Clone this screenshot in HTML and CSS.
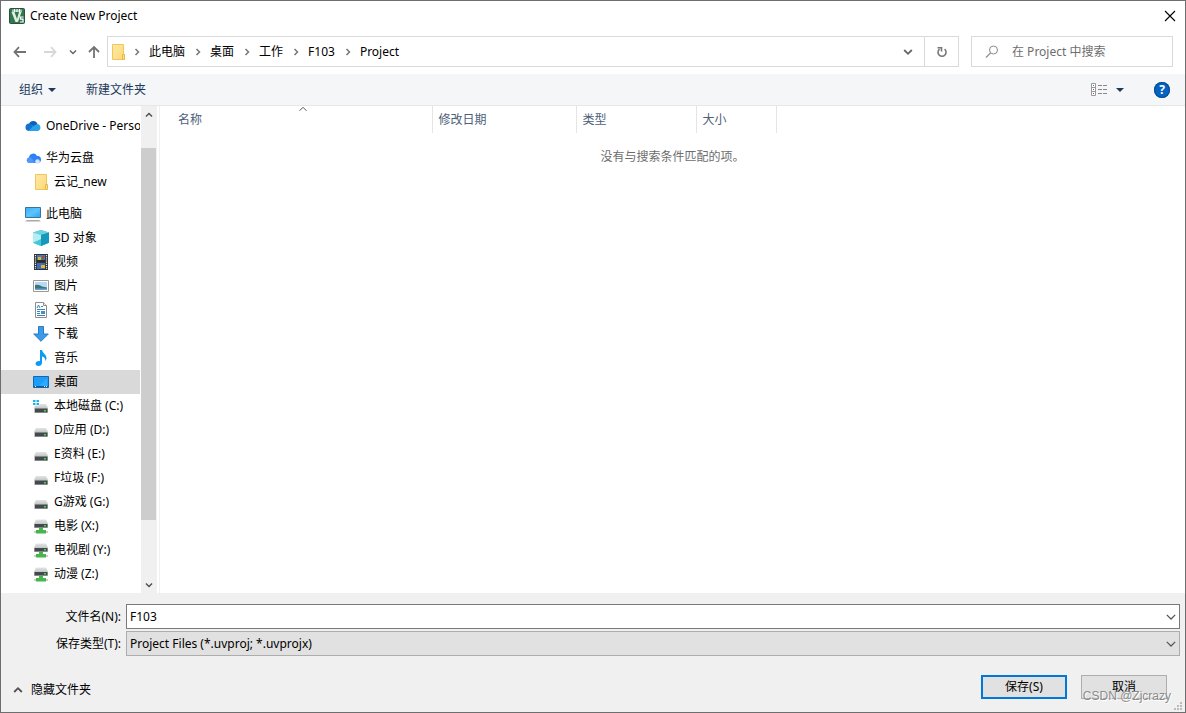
FILE: index.html
```html
<!DOCTYPE html>
<html lang="zh-CN">
<head>
<meta charset="utf-8">
<title>Create New Project</title>
<link rel="stylesheet" href="styles.css">
</head>
<body>
<svg class="sprite" aria-hidden="true">
  <defs>
    <linearGradient id="gFolder" x1="0" y1="0" x2="1" y2="1"><stop offset="0" stop-color="#ffe9a3"/><stop offset="1" stop-color="#fcd97a"/></linearGradient>
    <linearGradient id="gScreen" x1="0" y1="0" x2="1" y2="1"><stop offset="0" stop-color="#37aef8"/><stop offset=".5" stop-color="#5cc4ff"/><stop offset="1" stop-color="#2aa2f2"/></linearGradient>
    <linearGradient id="gLid" x1="0" y1="0" x2="0" y2="1"><stop offset="0" stop-color="#e2e4e5"/><stop offset="1" stop-color="#c4c7c9"/></linearGradient>
  </defs>
  <symbol id="folder" viewBox="0 0 16 16"><path d="M2.500.5h11v15h-11z" fill="url(#gFolder)" stroke="#eec65a"/><path d="M12.500 15.500v-5h2v5z" fill="#ffe08a" stroke="#e5b94a"/></symbol>
  <symbol id="drive" viewBox="0 0 16 16"><path d="M3 6h10l2 4H1z" fill="url(#gLid)"/><path d="M1 10h14v5H1z" fill="#c3c5c7"/><path d="M2 10.500h12.500v4H2z" fill="#45484b"/><path d="M11 12h2v1.500h-2z" fill="#2fe03c"/></symbol>
  <symbol id="netdrive" viewBox="0 0 16 16"><path d="M3 1.500h10L15 6H1z" fill="url(#gLid)"/><path d="M1 6h14v4H1z" fill="#c3c5c7"/><path d="M1.500 6h13v3.500h-13z" fill="#45484b"/><path d="M11 7h2v1.500h-2z" fill="#2fe03c"/><path d="M1 13h14v2H1z" fill="#c9cdca"/><path d="M6 10h4v2h3v3.500H3V12h3z" fill="#45b649"/></symbol>
  <symbol id="chev" viewBox="0 0 10 10"><path d="M1.500 3.200 5 6.700l3.500-3.500" fill="none" stroke="currentColor"/></symbol>
  <symbol id="chevbold" viewBox="0 0 10 10"><path d="M1.200 3 5 6.800 8.800 3" fill="none" stroke="currentColor" stroke-width="1.800"/></symbol>
  <symbol id="sep" viewBox="0 0 10 10"><path d="m3.500 2 3 3-3 3" fill="none" stroke="currentColor" stroke-width="1.500"/></symbol>
</svg>

<main class="dialog">
  <header class="titlebar">
    <svg class="icon" viewBox="0 0 16 16"><rect x=".5" y=".5" width="15" height="15" rx="1" fill="#34774e" stroke="#245538"/><path d="M3 1.500h10v2.500H3z" fill="#9fc3ab"/><path d="M5.500 1v3M8 1v3M10.500 1v3" stroke="#fff"/><path d="M2.500 4h3L8 11l2-7h2.500L9 14H6.500z" fill="#e3eee6"/><path d="M14.500 9h-3v2.200h2.500V14h-3" fill="none" stroke="#fff" stroke-width="1.200"/></svg>
    <h1 class="title">Create New Project</h1>
    <button class="close" aria-label="关闭"><svg width="12" height="12" viewBox="0 0 12 12"><path d="m1 1 10 10M11 1 1 11" stroke="#000" stroke-width="1.100"/></svg></button>
  </header>

  <nav class="navbar">
    <div class="history">
      <button class="plain" aria-label="后退"><svg width="14" height="12" viewBox="0 0 14 12"><path d="M1.500 6H13M6 1.200 1.500 6 6 10.800" fill="none" stroke="#737373" stroke-width="1.800"/></svg></button>
      <button class="plain" aria-label="前进"><svg width="14" height="12" viewBox="0 0 14 12"><path d="M1 6h11.500M8 1.200 12.500 6 8 10.800" fill="none" stroke="#d8d8d8" stroke-width="1.800"/></svg></button>
      <button class="plain recent" aria-label="最近的位置"><svg class="tiny"><use href="#chevbold"/></svg></button>
      <button class="plain" aria-label="上移"><svg width="12" height="14" viewBox="0 0 12 14"><path d="M6 13V2M1 7l5-5 5 5" fill="none" stroke="#737373" stroke-width="1.800"/></svg></button>
    </div>
    <div class="address">
      <svg class="icon"><use href="#folder"/></svg>
      <svg class="sep"><use href="#sep"/></svg><button class="crumb">此电脑</button>
      <svg class="sep"><use href="#sep"/></svg><button class="crumb">桌面</button>
      <svg class="sep"><use href="#sep"/></svg><button class="crumb">工作</button>
      <svg class="sep"><use href="#sep"/></svg><button class="crumb">F103</button>
      <svg class="sep"><use href="#sep"/></svg><button class="crumb">Project</button>
      <button class="plain drop" aria-label="以前的位置"><svg class="small"><use href="#chevbold"/></svg></button>
      <button class="refresh" aria-label="刷新"><svg width="12" height="12" viewBox="0 0 12 12"><path d="M3.500 3.200A4 4 0 1 0 8.600 3.200M1.500 1.700h4v3.800" fill="none" stroke="#777" stroke-width="1.600"/></svg></button>
    </div>
    <label class="search">
      <svg width="14" height="14" viewBox="0 0 14 14"><circle cx="8.500" cy="5" r="4" fill="none" stroke="#8a8a8a"/><path d="M5.500 8 1 12.500" stroke="#a08c8c" stroke-width="1.200"/></svg>
      <input type="search" placeholder="在 Project 中搜索" aria-label="在 Project 中搜索">
    </label>
  </nav>

  <div class="toolbar">
    <button class="tool">组织<span class="caret"></span></button>
    <button class="tool">新建文件夹</button>
    <button class="tool view" aria-label="更改视图"><svg width="17" height="13" viewBox="0 0 17 13"><path d="M.5.5h4v12h-4zM.5 4.500h4M.5 8.500h4" fill="#fff" stroke="#999"/><path d="M2 2h1v1H2zM2 6h1v1H2z" fill="#4b7db5"/><path d="M2 10h1v1H2z" fill="#c33"/><path d="M7 2.500h4m1 0h4M7 6.500h4m1 0h4M7 10.500h4m1 0h4" stroke="#888"/></svg><span class="caret"></span></button>
    <button class="help" aria-label="帮助">?</button>
  </div>

  <section class="content">
    <aside class="tree">
      <ul class="group">
        <li class="item"><svg class="icon" viewBox="0 0 16 16"><path d="M4 6a4.500 4.500 0 0 1 8.500 0L8 10 2 8z" fill="#0f5fb5"/><path d="M4 5.500a3.800 3.800 0 0 0-.5 7.500l7-4.500-4-2.600z" fill="#1272cf"/><path d="M8 8.200 12 6a3.600 3.600 0 0 1 1 7H3.500z" fill="#28a2ea"/></svg>OneDrive - Personal</li>
      </ul>
      <ul class="group">
        <li class="item"><svg class="icon" viewBox="0 0 16 16"><path d="M4 7.500A4.200 4.200 0 0 1 12 6a3.500 3.500 0 0 1 1 7H4a2.800 2.800 0 0 1 0-5.500z" fill="#2f82f5"/><path d="M4 7.500c3 0 4 2 5.500 5.500H4a2.800 2.800 0 0 1 0-5.500z" fill="#4f98fb"/><circle cx="12.500" cy="11.500" r="2.300" fill="#d5e5fa"/></svg>华为云盘</li>
        <li class="item sub"><svg class="icon"><use href="#folder"/></svg>云记_new</li>
      </ul>
      <ul class="group">
        <li class="item"><svg class="icon" viewBox="0 0 16 16"><path d="M.5 1.500h15v10H.5z" fill="url(#gScreen)" stroke="#3e7396"/><path d="M2 14h12l2 1.500H0z" fill="#a3abb2"/></svg>此电脑</li>
        <li class="item sub"><svg class="icon" viewBox="0 0 16 16"><path d="m8 0 8 2.500v10.300L8 16 0 12.800V2.500z" fill="#38b4cc"/><path d="m8 0 8 2.500L8 5 0 2.500z" fill="#6fd0e0"/><path d="M0 2.500 8 5v11l-8-3.200z" fill="#b5eef2"/><path d="M8 9v7l-8-3.200z" fill="#42c7d8"/><path d="m16 2.500-8 2.500v11l8-3.200z" fill="#1599ba"/></svg>3D 对象</li>
        <li class="item sub"><svg class="icon" viewBox="0 0 16 16"><path d="M1 0h14v16H1z" fill="#333"/><path d="M2.500 1v14M13.500 1v14" stroke="#eee" stroke-width="1.200" stroke-dasharray="1.200 1"/><path d="M4 1h8v7H4z" fill="#4679ba"/><path d="M4 9h8v6H4z" fill="#3a6fc2"/><path d="M5 3h3v3H5zM8 11h4v3H8z" fill="#e0b92c"/><path d="M9 2h2v3H9z" fill="#a64a32"/><path d="M4 6h8v2H4z" fill="#272d28"/></svg>视频</li>
        <li class="item sub"><svg class="icon" viewBox="0 0 16 16"><path d="M.5 2.500h15v11H.5z" fill="#fff" stroke="#9a9a9a"/><path d="M2 4h12v8H2z" fill="#b4daf5"/><path d="M2 7q4-1 7 1.500l5 1V12H2z" fill="#3e7479"/><path d="M2 10.500h12V12H2z" fill="#6ba1cc"/></svg>图片</li>
        <li class="item sub"><svg class="icon" viewBox="0 0 16 16"><path d="M2.500.5h8l3 3v12h-11z" fill="#fff" stroke="#8d8d8d"/><path d="M10.500.5v3h3" fill="#eee" stroke="#8d8d8d"/><path d="m4 6 1.500-3L7 6M8 4.500h2M4 7.500h8M4 9.500h3M4 11.500h3M4 13.500h8" fill="none" stroke="#3784bd"/><path d="M8 9h4v3H8z" fill="#4b8dbd"/></svg>文档</li>
        <li class="item sub"><svg class="icon" viewBox="0 0 16 16"><path d="M5.500.5h5V8h4.800L8 15.300.7 8h4.800z" fill="#3c9aeb" stroke="#2b7cc2"/></svg>下载</li>
        <li class="item sub"><svg class="icon" viewBox="0 0 16 16"><path d="M7 0h2c.4 3 4.800 4.500 4.500 8.500-.2 1.300-.8 2-1.500 2.500.8-3-1-4-3-4.600V13c0 1.800-1.700 3-3.700 3C3.600 16 2.500 15 2.500 13.800c0-2 2.300-3.200 4.500-2.600z" fill="#0d9bf2"/></svg>音乐</li>
        <li class="item sub selected"><svg class="icon" viewBox="0 0 16 16"><path d="M.5 2.500h15v11H.5z" fill="#1c9df8" stroke="#1168ae"/><path d="m6 12 8-8v8z" fill="#2fa9ff"/><path d="M1 12.500h14" stroke="#0c5796"/><path d="M2 12.500h1m8 0h1m1 0h1" stroke="#fff"/></svg>桌面</li>
        <li class="item sub"><svg class="icon" viewBox="0 0 16 16"><use href="#drive"/><path d="M0 1h6.500v6.500H0z" fill="#fff"/><path d="M0 2h2.500v2H0zM3.500 2H6v2H3.500zM0 5h2.500v2H0zM3.500 5H6v2H3.500z" fill="#16b4ef"/></svg>本地磁盘 (C:)</li>
        <li class="item sub"><svg class="icon"><use href="#drive"/></svg>D应用 (D:)</li>
        <li class="item sub"><svg class="icon"><use href="#drive"/></svg>E资料 (E:)</li>
        <li class="item sub"><svg class="icon"><use href="#drive"/></svg>F垃圾 (F:)</li>
        <li class="item sub"><svg class="icon"><use href="#drive"/></svg>G游戏 (G:)</li>
        <li class="item sub"><svg class="icon"><use href="#netdrive"/></svg>电影 (X:)</li>
        <li class="item sub"><svg class="icon"><use href="#netdrive"/></svg>电视剧 (Y:)</li>
        <li class="item sub"><svg class="icon"><use href="#netdrive"/></svg>动漫 (Z:)</li>
      </ul>
    </aside>
    <div class="scrollbar">
      <button class="plain arrow" aria-label="向上滚动"><svg class="tiny flip"><use href="#chevbold"/></svg></button>
      <div class="track"><div class="thumb"></div></div>
      <button class="plain arrow" aria-label="向下滚动"><svg class="tiny"><use href="#chevbold"/></svg></button>
    </div>
    <div class="files">
      <table class="list">
        <colgroup><col class="c-name"><col class="c-date"><col class="c-type"><col class="c-size"><col></colgroup>
        <thead><tr>
          <th class="sorted">名称<svg class="small flip sort"><use href="#chev"/></svg></th><th>修改日期</th><th>类型</th><th>大小</th><td></td>
        </tr></thead>
        <tbody><tr><td class="empty" colspan="5">没有与搜索条件匹配的项。</td></tr></tbody>
      </table>
    </div>
  </section>

  <form class="footer">
    <div class="fields">
      <label for="name">文件名(N):</label>
      <div class="combo editable"><input id="name" type="text" value="F103"><svg class="combo-arrow"><use href="#chev"/></svg></div>
      <label for="type">保存类型(T):</label>
      <div class="combo"><select id="type"><option>Project Files (*.uvproj; *.uvprojx)</option></select><svg class="combo-arrow"><use href="#chev"/></svg></div>
    </div>
    <div class="actions">
      <button type="button" class="plain hide"><svg class="small flip"><use href="#chevbold"/></svg>隐藏文件夹</button>
      <button type="button" class="btn primary">保存(S)</button>
      <button type="button" class="btn">取消</button>
    </div>
  </form>
  <span class="watermark">CSDN @Zjcrazy</span>
  <svg class="grip" viewBox="0 0 8 8"><path d="M6 0h2v2H6zM3 3h2v2H3zM6 3h2v2H6zM0 6h2v2H0zM3 6h2v2H3zM6 6h2v2H6z" fill="#bbb"/></svg>
</main>
</body>
</html>
```

FILE: styles.css
```css
* { box-sizing: border-box; }

body,
button,
input,
select {
  margin: 0;
  font-family: "Noto Sans", "Noto Sans CJK SC", sans-serif;
  font-size: 12px;
  line-height: 16px;
  color: #000;
}

button {
  padding: 0;
  border: 0;
  background: none;
}

svg { flex: none; display: block; }

.sprite { position: absolute; width: 0; height: 0; }
.icon { width: 16px; height: 16px; }
.small { width: 10px; height: 10px; }
.tiny { width: 8px; height: 8px; }
.flip { transform: scaleY(-1); }

.plain {
  display: flex;
  align-items: center;
  justify-content: center;
  color: #666;
}

.dialog {
  position: relative;
  display: flex;
  flex-direction: column;
  height: 100vh;
  border: 1px solid #6e6e6e;
  background: #fff;
}

.titlebar {
  display: flex;
  align-items: center;
  gap: 5px;
  height: 30px;
  padding-left: 8px;
}

.title { margin: 0; font-size: 12px; font-weight: 400; }

.close {
  display: flex;
  align-items: center;
  justify-content: center;
  width: 30px;
  height: 30px;
  margin-left: auto;
}

.navbar {
  display: flex;
  gap: 12px;
  padding: 5px 12px 7px 0;
}

.history {
  display: flex;
  align-items: center;
  gap: 16px;
  width: 94px;
  padding-left: 12px;
}

.recent { margin: 0 -5px 0 -4px; }

.address {
  display: flex;
  align-items: center;
  flex: 1;
  height: 31px;
  border: 1px solid #d9d9d9;
  padding-left: 2px;
}

.sep { width: 10px; height: 10px; margin: 0 7px 0 6px; color: #777; }
.crumb { padding: 0 2px 0 0; }
.drop { width: 32px; height: 29px; margin-left: auto; }

.refresh {
  display: flex;
  align-items: center;
  justify-content: center;
  width: 34px;
  height: 29px;
  border-left: 1px solid #d9d9d9;
}

.search {
  display: flex;
  align-items: center;
  gap: 13px;
  width: 202px;
  height: 31px;
  padding: 0 8px 0 13px;
  border: 1px solid #d9d9d9;
}

.search input {
  flex: 1;
  min-width: 0;
  padding: 0;
  border: 0;
  outline: 0;
  background: none;
}

.search input::placeholder { color: #6d6d6d; opacity: 1; }

.toolbar {
  display: flex;
  align-items: center;
  gap: 30px;
  height: 32px;
  padding: 0 15px 0 18px;
  border-bottom: 1px solid #e5e8ea;
  background: #f4f6f8;
}

.tool {
  display: flex;
  align-items: center;
  gap: 5px;
  color: #1e395b;
}

.caret {
  border: 4px solid transparent;
  border-top-color: #1e395b;
  border-bottom: 0;
}

.view { gap: 8px; margin-left: auto; }

.help {
  width: 16px;
  height: 16px;
  border-radius: 50%;
  background: #0562c1;
  box-shadow: inset 0 0 0 1px #064b92;
  color: #fff;
  font-weight: 700;
}

.content {
  display: flex;
  flex: 1;
  min-height: 0;
}

.tree {
  width: 139px;
  padding-top: 8px;
  overflow: hidden;
}

.group { margin: 0 0 8px; padding: 0; list-style: none; }

.item {
  display: flex;
  align-items: center;
  gap: 5px;
  height: 24px;
  padding-left: 24px;
  white-space: nowrap;
}

.sub { padding-left: 32px; }
.selected { background: #d9d9d9; }

.scrollbar {
  display: flex;
  flex-direction: column;
  width: 16px;
  margin-left: 1px;
  background: #f0f0f0;
}

.arrow { height: 17px; color: #505050; }
.track { flex: 1; padding-top: 25px; }
.thumb { width: 15px; height: 87%; background: #cdcdcd; }

.files {
  flex: 1;
  margin-left: 2px;
  border-left: 1px solid #f0f0f0;
}

.list {
  width: 100%;
  border-collapse: collapse;
  table-layout: fixed;
}

.c-name { width: 272px; }
.c-date { width: 144px; }
.c-type { width: 120px; }
.c-size { width: 80px; }

.list th {
  position: relative;
  height: 27px;
  padding: 0 6px;
  border-right: 1px solid #e5e5e5;
  color: #4c607a;
  font-weight: 400;
  text-align: left;
}

.list .sorted { padding-left: 18px; }
.sort { position: absolute; top: -2px; left: calc(50% + 2px); color: #555; }

.empty {
  padding: 16px 0 0;
  color: #6d6d6d;
  text-align: center;
}

.footer {
  padding: 11px 5px 13px 0;
  background: #f0f0f0;
}

.fields {
  display: grid;
  grid-template-columns: 120px 1fr;
  gap: 2px 5px;
  align-items: center;
}

.fields label { text-align: right; }

.combo {
  position: relative;
  height: 25px;
  border: 1px solid #adadad;
  background: #e1e1e1;
}

.editable { border-color: #7a7a7a; background: #fff; }

.combo input,
.combo select {
  display: block;
  width: 100%;
  height: 23px;
  padding: 0 24px 0 3px;
  border: 0;
  outline: 0;
  background: none;
  appearance: none;
}

.combo-arrow {
  position: absolute;
  top: 6px;
  right: 2px;
  width: 12px;
  height: 12px;
  color: #555;
  pointer-events: none;
}

.actions {
  display: flex;
  align-items: center;
  gap: 14px;
  padding: 19px 13px 0 12px;
}

.hide {
  gap: 8px;
  margin: 6px auto 0 0;
  color: #000;
}

.hide svg { color: #505050; }

.btn {
  width: 86px;
  height: 24px;
  border: 1px solid #adadad;
  background: #e1e1e1;
}

.primary { border: 2px solid #0078d7; }

.watermark {
  position: absolute;
  right: 14px;
  bottom: 8px;
  color: #8c8c8c;
  font: 12px/16px "Liberation Sans", sans-serif;
  text-shadow: 1px 1px 0 #fff;
}

.grip {
  position: absolute;
  right: 3px;
  bottom: 2px;
  width: 8px;
  height: 8px;
}
```
